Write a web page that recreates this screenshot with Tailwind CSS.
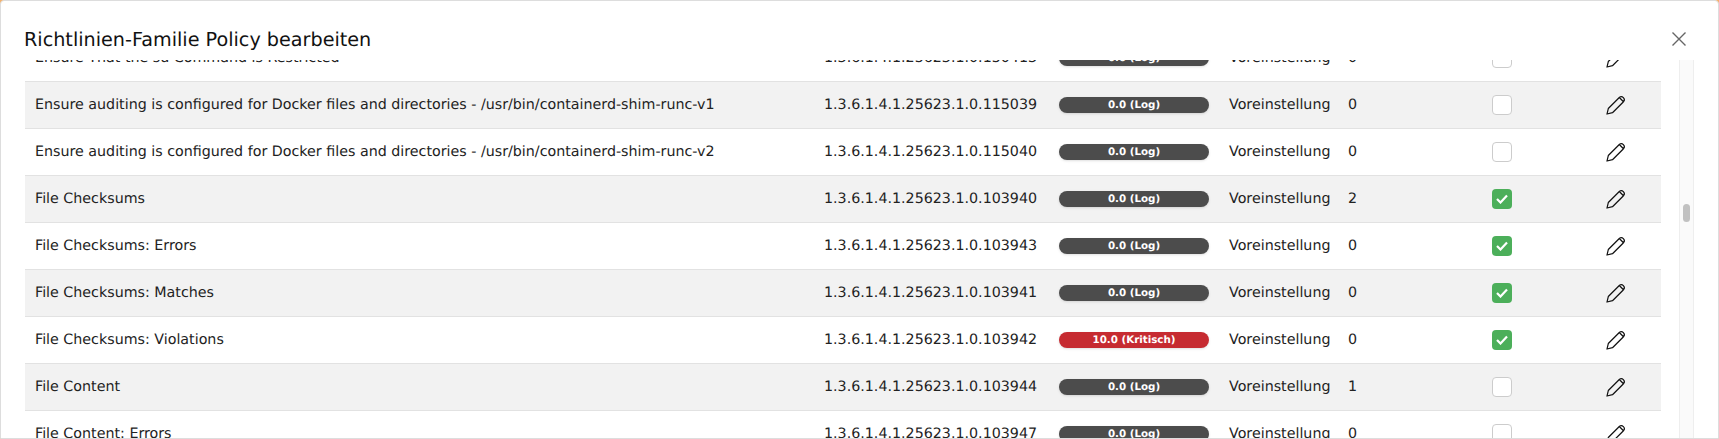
<!DOCTYPE html>
<html lang="de">
<head>
  <meta charset="UTF-8" />
  <title>Richtlinien-Familie Policy bearbeiten</title>
  <script src="https://cdn.jsdelivr.net/npm/@tailwindcss/browser@4"></script>
</head>
<body class="h-[439px] w-[1719px] overflow-hidden bg-[#f5b26b] font-['DejaVu_Sans',sans-serif] text-[14.25px] text-[#222] [text-rendering:geometricPrecision]">
  <div class="flex h-[439px] flex-col rounded-t-[4px] border border-[#ddd] bg-white">

    <!-- Title bar -->
    <div class="flex h-[59px] shrink-0 items-start justify-between pl-[23px] pr-[170px] pt-[26px]">
      <h1 class="text-[19.2px] leading-[26px] text-[#111]">Richtlinien-Familie Policy bearbeiten</h1>
    </div>
    <button class="absolute left-[1671px] top-[31px] text-[#666]">
      <svg class="block" width="16" height="16" viewBox="0 0 16 16" fill="none" stroke="currentColor" stroke-width="1.4"><path d="M1.5 1.500l13 13M14.500 1.500l-13 13"/></svg>
    </button>

    <!-- Scroll area -->
    <div class="flex min-h-0 flex-1 pl-6 pr-6">
      <div class="min-w-0 w-[1636px] overflow-hidden">
        <div class="-mt-[25px]">

          <div class="grid h-[47px] grid-cols-[789px_235px_170px_119px_144px_113px_1fr] items-center border-b border-[#e2e2e2] bg-white pl-[10px]">
            <span class="translate-y-px">Ensure That the su Command is Restricted</span>
            <span class="translate-y-px">1.3.6.1.4.1.25623.1.0.150413</span>
            <span class="h-4 w-[150px] rounded-lg bg-[#4c4c4c] text-center text-[10.3px] font-bold leading-4 text-white shadow-sm">0.0 (Log)</span>
            <span class="translate-y-px">Voreinstellung</span>
            <span class="translate-y-px">0</span>
            <span class="h-5 w-5 rounded-[4px] border border-[#ccc] bg-white"></span>
            <svg width="22" height="22" viewBox="0 0 20 20" fill="none" stroke="#111" stroke-width="1.1" stroke-linejoin="round"><path d="M1.800 18.200L3 13.200 13 3.200A2.690 2.690 0 0 1 16.800 7L6.800 17zM13 3.200L16.800 7"/></svg>
          </div>

          <div class="grid h-[47px] grid-cols-[789px_235px_170px_119px_144px_113px_1fr] items-center border-b border-[#e2e2e2] bg-[#f2f2f2] pl-[10px]">
            <span class="translate-y-px">Ensure auditing is configured for Docker files and directories - /usr/bin/containerd-shim-runc-v1</span>
            <span class="translate-y-px">1.3.6.1.4.1.25623.1.0.115039</span>
            <span class="h-4 w-[150px] rounded-lg bg-[#4c4c4c] text-center text-[10.3px] font-bold leading-4 text-white shadow-sm">0.0 (Log)</span>
            <span class="translate-y-px">Voreinstellung</span>
            <span class="translate-y-px">0</span>
            <span class="h-5 w-5 rounded-[4px] border border-[#ccc] bg-white"></span>
            <svg width="22" height="22" viewBox="0 0 20 20" fill="none" stroke="#111" stroke-width="1.1" stroke-linejoin="round"><path d="M1.800 18.200L3 13.200 13 3.200A2.690 2.690 0 0 1 16.800 7L6.800 17zM13 3.200L16.800 7"/></svg>
          </div>

          <div class="grid h-[47px] grid-cols-[789px_235px_170px_119px_144px_113px_1fr] items-center border-b border-[#e2e2e2] bg-white pl-[10px]">
            <span class="translate-y-px">Ensure auditing is configured for Docker files and directories - /usr/bin/containerd-shim-runc-v2</span>
            <span class="translate-y-px">1.3.6.1.4.1.25623.1.0.115040</span>
            <span class="h-4 w-[150px] rounded-lg bg-[#4c4c4c] text-center text-[10.3px] font-bold leading-4 text-white shadow-sm">0.0 (Log)</span>
            <span class="translate-y-px">Voreinstellung</span>
            <span class="translate-y-px">0</span>
            <span class="h-5 w-5 rounded-[4px] border border-[#ccc] bg-white"></span>
            <svg width="22" height="22" viewBox="0 0 20 20" fill="none" stroke="#111" stroke-width="1.1" stroke-linejoin="round"><path d="M1.800 18.200L3 13.200 13 3.200A2.690 2.690 0 0 1 16.800 7L6.800 17zM13 3.200L16.800 7"/></svg>
          </div>

          <div class="grid h-[47px] grid-cols-[789px_235px_170px_119px_144px_113px_1fr] items-center border-b border-[#e2e2e2] bg-[#f2f2f2] pl-[10px]">
            <span class="translate-y-px">File Checksums</span>
            <span class="translate-y-px">1.3.6.1.4.1.25623.1.0.103940</span>
            <span class="h-4 w-[150px] rounded-lg bg-[#4c4c4c] text-center text-[10.3px] font-bold leading-4 text-white shadow-sm">0.0 (Log)</span>
            <span class="translate-y-px">Voreinstellung</span>
            <span class="translate-y-px">2</span>
            <span class="flex h-5 w-5 items-center justify-center rounded-[4px] bg-[#4caf5a]"><svg width="12" height="10" viewBox="0 0 12 10" fill="none" stroke="#fff" stroke-width="2.200"><path d="M1 5l3.500 3.500L11 1.500"/></svg></span>
            <svg width="22" height="22" viewBox="0 0 20 20" fill="none" stroke="#111" stroke-width="1.1" stroke-linejoin="round"><path d="M1.800 18.200L3 13.200 13 3.200A2.690 2.690 0 0 1 16.800 7L6.800 17zM13 3.200L16.800 7"/></svg>
          </div>

          <div class="grid h-[47px] grid-cols-[789px_235px_170px_119px_144px_113px_1fr] items-center border-b border-[#e2e2e2] bg-white pl-[10px]">
            <span class="translate-y-px">File Checksums: Errors</span>
            <span class="translate-y-px">1.3.6.1.4.1.25623.1.0.103943</span>
            <span class="h-4 w-[150px] rounded-lg bg-[#4c4c4c] text-center text-[10.3px] font-bold leading-4 text-white shadow-sm">0.0 (Log)</span>
            <span class="translate-y-px">Voreinstellung</span>
            <span class="translate-y-px">0</span>
            <span class="flex h-5 w-5 items-center justify-center rounded-[4px] bg-[#4caf5a]"><svg width="12" height="10" viewBox="0 0 12 10" fill="none" stroke="#fff" stroke-width="2.200"><path d="M1 5l3.500 3.500L11 1.500"/></svg></span>
            <svg width="22" height="22" viewBox="0 0 20 20" fill="none" stroke="#111" stroke-width="1.1" stroke-linejoin="round"><path d="M1.800 18.200L3 13.200 13 3.200A2.690 2.690 0 0 1 16.800 7L6.800 17zM13 3.200L16.800 7"/></svg>
          </div>

          <div class="grid h-[47px] grid-cols-[789px_235px_170px_119px_144px_113px_1fr] items-center border-b border-[#e2e2e2] bg-[#f2f2f2] pl-[10px]">
            <span class="translate-y-px">File Checksums: Matches</span>
            <span class="translate-y-px">1.3.6.1.4.1.25623.1.0.103941</span>
            <span class="h-4 w-[150px] rounded-lg bg-[#4c4c4c] text-center text-[10.3px] font-bold leading-4 text-white shadow-sm">0.0 (Log)</span>
            <span class="translate-y-px">Voreinstellung</span>
            <span class="translate-y-px">0</span>
            <span class="flex h-5 w-5 items-center justify-center rounded-[4px] bg-[#4caf5a]"><svg width="12" height="10" viewBox="0 0 12 10" fill="none" stroke="#fff" stroke-width="2.200"><path d="M1 5l3.500 3.500L11 1.500"/></svg></span>
            <svg width="22" height="22" viewBox="0 0 20 20" fill="none" stroke="#111" stroke-width="1.1" stroke-linejoin="round"><path d="M1.800 18.200L3 13.200 13 3.200A2.690 2.690 0 0 1 16.800 7L6.800 17zM13 3.200L16.800 7"/></svg>
          </div>

          <div class="grid h-[47px] grid-cols-[789px_235px_170px_119px_144px_113px_1fr] items-center border-b border-[#e2e2e2] bg-white pl-[10px]">
            <span class="translate-y-px">File Checksums: Violations</span>
            <span class="translate-y-px">1.3.6.1.4.1.25623.1.0.103942</span>
            <span class="h-4 w-[150px] rounded-lg bg-[#c62b31] text-center text-[10.3px] font-bold leading-4 text-white shadow-sm">10.0 (Kritisch)</span>
            <span class="translate-y-px">Voreinstellung</span>
            <span class="translate-y-px">0</span>
            <span class="flex h-5 w-5 items-center justify-center rounded-[4px] bg-[#4caf5a]"><svg width="12" height="10" viewBox="0 0 12 10" fill="none" stroke="#fff" stroke-width="2.200"><path d="M1 5l3.500 3.500L11 1.500"/></svg></span>
            <svg width="22" height="22" viewBox="0 0 20 20" fill="none" stroke="#111" stroke-width="1.1" stroke-linejoin="round"><path d="M1.800 18.200L3 13.200 13 3.200A2.690 2.690 0 0 1 16.800 7L6.800 17zM13 3.200L16.800 7"/></svg>
          </div>

          <div class="grid h-[47px] grid-cols-[789px_235px_170px_119px_144px_113px_1fr] items-center border-b border-[#e2e2e2] bg-[#f2f2f2] pl-[10px]">
            <span class="translate-y-px">File Content</span>
            <span class="translate-y-px">1.3.6.1.4.1.25623.1.0.103944</span>
            <span class="h-4 w-[150px] rounded-lg bg-[#4c4c4c] text-center text-[10.3px] font-bold leading-4 text-white shadow-sm">0.0 (Log)</span>
            <span class="translate-y-px">Voreinstellung</span>
            <span class="translate-y-px">1</span>
            <span class="h-5 w-5 rounded-[4px] border border-[#ccc] bg-white"></span>
            <svg width="22" height="22" viewBox="0 0 20 20" fill="none" stroke="#111" stroke-width="1.1" stroke-linejoin="round"><path d="M1.800 18.200L3 13.200 13 3.200A2.690 2.690 0 0 1 16.800 7L6.800 17zM13 3.200L16.800 7"/></svg>
          </div>

          <div class="grid h-[47px] grid-cols-[789px_235px_170px_119px_144px_113px_1fr] items-center border-b border-[#e2e2e2] bg-white pl-[10px]">
            <span class="translate-y-px">File Content: Errors</span>
            <span class="translate-y-px">1.3.6.1.4.1.25623.1.0.103947</span>
            <span class="h-4 w-[150px] rounded-lg bg-[#4c4c4c] text-center text-[10.3px] font-bold leading-4 text-white shadow-sm">0.0 (Log)</span>
            <span class="translate-y-px">Voreinstellung</span>
            <span class="translate-y-px">0</span>
            <span class="h-5 w-5 rounded-[4px] border border-[#ccc] bg-white"></span>
            <svg width="22" height="22" viewBox="0 0 20 20" fill="none" stroke="#111" stroke-width="1.1" stroke-linejoin="round"><path d="M1.800 18.200L3 13.200 13 3.200A2.690 2.690 0 0 1 16.800 7L6.800 17zM13 3.200L16.800 7"/></svg>
          </div>

        </div>
      </div>

      <!-- Scrollbar -->
      <div class="ml-[18px] w-[15px] border-x border-[#eee] bg-[#fafafa] pl-[3px] pt-[144px]">
        <div class="h-[18px] w-[7px] rounded bg-[#c1c1c1]"></div>
      </div>
    </div>
  </div>
</body>
</html>
